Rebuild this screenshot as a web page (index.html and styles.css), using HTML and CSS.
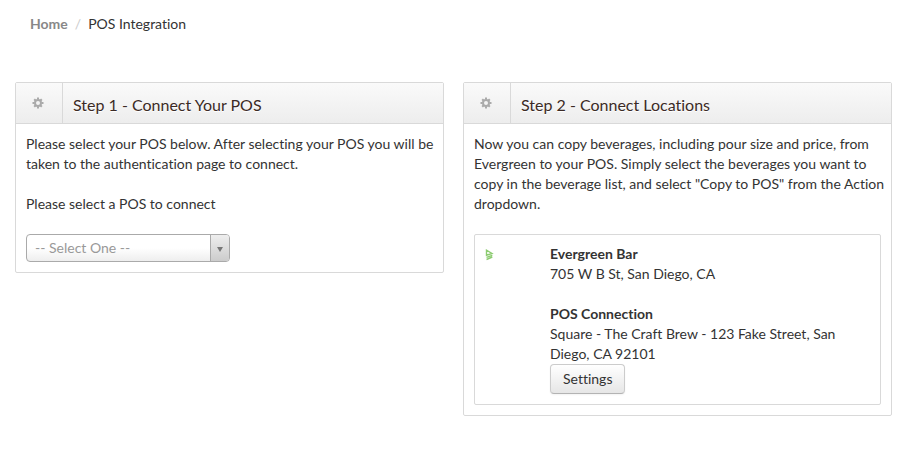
FILE: index.html
```html
<!DOCTYPE html>
<html lang="en">

<head>
    <meta charset="UTF-8">
    <meta name="viewport" content="width=device-width, initial-scale=1.0">
    <title>POS Integration</title>
    <link rel="stylesheet" href="styles.css">
</head>

<body>
    <nav class="breadcrumb">
        <a href="#">Home</a>
        <span class="divider">/</span>
        <span>POS Integration</span>
    </nav>

    <main class="row">
        <section class="widget">
            <header class="widget-title">
                <span class="icon">
                    <svg width="12" height="12" viewBox="0 0 12 12">
                        <circle cx="6" cy="6" r="3" class="gear-ring" />
                        <path class="gear-teeth" d="M6 .5v2M6 9.500v2M.5 6h2M9.500 6h2M2.200 2.200l1.300 1.300M8.500 8.500l1.300 1.300M2.200 9.800l1.300-1.300M8.500 3.500l1.300-1.300" />
                    </svg>
                </span>
                <h2>Step 1 - Connect Your POS</h2>
            </header>
            <div class="widget-content">
                <p class="intro">Please select your POS below. After selecting your POS you will be taken to the authentication page to connect.</p>
                <label for="pos">Please select a POS to connect</label>
                <div class="select-box">
                    <select id="pos" name="pos">
                        <option>-- Select One --</option>
                        <option>Square</option>
                    </select>
                    <span class="arrow"></span>
                </div>
            </div>
        </section>

        <section class="widget">
            <header class="widget-title">
                <span class="icon">
                    <svg width="12" height="12" viewBox="0 0 12 12">
                        <circle cx="6" cy="6" r="3" class="gear-ring" />
                        <path class="gear-teeth" d="M6 .5v2M6 9.500v2M.5 6h2M9.500 6h2M2.200 2.200l1.300 1.300M8.500 8.500l1.300 1.300M2.200 9.800l1.300-1.300M8.500 3.500l1.300-1.300" />
                    </svg>
                </span>
                <h2>Step 2 - Connect Locations</h2>
            </header>
            <div class="widget-content">
                <p class="intro">Now you can copy beverages, including pour size and price, from Evergreen to your POS. Simply select the beverages you want to copy in the beverage list, and select "Copy to POS" from the Action dropdown.</p>
                <div class="location">
                    <div class="logo">
                        <svg width="9" height="12" viewBox="0 0 9 12">
                            <path d="M1.500 1.200v5l5.500-1.700zM1.500 8.300l5.800-2M1.500 10.500l5.800-2.500" />
                        </svg>
                    </div>
                    <div class="details">
                        <strong>Evergreen Bar</strong>
                        <p>705 W B St, San Diego, CA</p>
                        <strong>POS Connection</strong>
                        <div>Square - The Craft Brew - 123 Fake Street, San Diego, CA 92101</div>
                        <button type="button" class="btn">Settings</button>
                    </div>
                </div>
            </div>
        </section>
    </main>
</body>

</html>
```

FILE: styles.css
```css
* {
    box-sizing: border-box;
}

body {
    margin: 0;
    padding: 14px 30px 0 15px;
    background: #fff;
    color: #333;
    font-family: Lato, sans-serif;
    font-size: 14px;
    line-height: 20px;
    font-variant-ligatures: none;
}

.breadcrumb {
    display: flex;
    gap: 7px;
    padding: 0 15px;
    margin-bottom: 48px;
}

.breadcrumb a {
    color: #888;
    font-weight: bold;
    text-decoration: none;
}

.breadcrumb .divider {
    color: #ccc;
}

.row {
    display: grid;
    grid-template-columns: 1fr 1fr;
    gap: 19px;
    align-items: start;
}

.widget {
    border: 1px solid #d9d9d9;
    border-radius: 2px;
}

.widget-title {
    display: flex;
    height: 41px;
    border-bottom: 1px solid #d9d9d9;
    background: linear-gradient(#fafafa, #ededed);
}

.widget-title .icon {
    display: flex;
    justify-content: center;
    width: 47px;
    padding-top: 14px;
    padding-right: 2px;
    border-right: 1px solid #d9d9d9;
}

.gear-ring,
.gear-teeth {
    fill: none;
    stroke: #aaa;
    stroke-width: 2;
}

.widget-title h2 {
    margin: 0;
    padding: 12px 10px 0;
    color: #3b2a25;
    font-size: 16px;
    font-weight: normal;
    line-height: 20px;
    text-shadow: 0 1px 0 #fff;
}

.widget-content {
    padding: 10px;
}

p {
    margin: 0 0 20px;
}

.intro {
    margin-right: -8px;
}

label {
    display: block;
    margin-bottom: 20px;
}

.select-box {
    position: relative;
    width: 204px;
    height: 28px;
}

select {
    appearance: none;
    width: 100%;
    height: 100%;
    padding: 0 28px 2px 8px;
    border: 1px solid #aaa;
    border-radius: 4px;
    background: linear-gradient(#fff 50%, #eee);
    color: #999;
    font-family: inherit;
    font-size: 14px;
}

.arrow {
    position: absolute;
    top: 1px;
    right: 1px;
    bottom: 1px;
    display: flex;
    align-items: center;
    justify-content: center;
    width: 19px;
    border-left: 1px solid #aaa;
    border-radius: 0 3px 3px 0;
    background: linear-gradient(#eee, #ccc);
    pointer-events: none;
}

.arrow::after {
    content: "";
    margin-top: 3px;
    border: 3px solid transparent;
    border-top: 5px solid #777;
    border-bottom: 0;
}

.location {
    display: flex;
    padding: 9px 10px 10px;
    border: 1px solid #d9d9d9;
    border-radius: 2px;
}

.logo {
    flex: none;
    width: 65px;
    padding-top: 5px;
}

.logo svg {
    display: block;
}

.logo path {
    fill: none;
    stroke: #8ccb70;
    stroke-width: 1.4;
}

.details strong {
    display: block;
}

.btn {
    display: block;
    height: 30px;
    padding: 0 12px;
    border: 1px solid #ccc;
    border-bottom-color: #b3b3b3;
    border-radius: 4px;
    background: linear-gradient(#fff, #e6e6e6);
    box-shadow: 0 1px 2px rgba(0, 0, 0, 0.05);
    color: #333;
    font-family: inherit;
    font-size: 14px;
    font-variant-ligatures: none;
    line-height: 20px;
}
```
